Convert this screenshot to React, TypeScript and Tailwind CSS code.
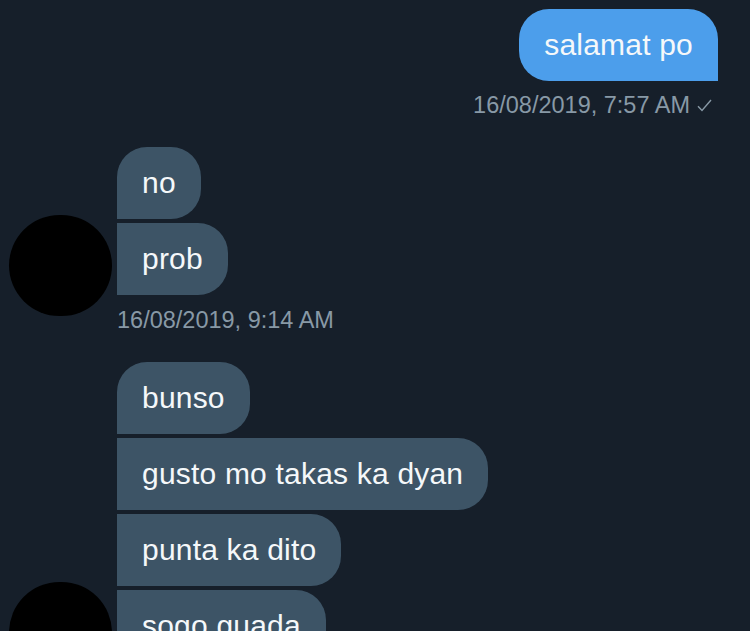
import React from 'react'

const font = { fontFamily: '"Liberation Sans", Arial, sans-serif' }

type Pos = 'first' | 'middle' | 'last'

function Bubble({ text, pos }: { text: string; pos: Pos }) {
  const corners = pos === 'first' ? 'rounded-tl-[30px]' : 'rounded-tl-none'
  return (
    <div
      className={`h-[72px] w-fit rounded-r-[30px] rounded-bl-none bg-[#3d5466] px-[25px] text-[30px] leading-[72px] tracking-[0.2px] text-[#f5f8fa] ${corners}`}
    >
      {text}
    </div>
  )
}

function Group({ messages, time }: { messages: string[]; time: string }) {
  return (
    <div className="flex">
      <div className="flex w-[117px] shrink-0 items-end pb-[19px] pl-[9px]">
        <div className="h-[101px] w-[103px] rounded-full bg-black" />
      </div>
      <div className="flex flex-col">
        <div className="flex flex-col gap-[4px]">
          {messages.map((m, i) => (
            <Bubble
              key={i}
              text={m}
              pos={i === 0 ? 'first' : i === messages.length - 1 ? 'last' : 'middle'}
            />
          ))}
        </div>
        <div className="mt-[10px] text-[23.5px] leading-[30px] text-[#8899a6]">{time}</div>
      </div>
    </div>
  )
}

export default function App() {
  return (
    <main className="h-[631px] w-[750px] overflow-hidden bg-[#161f2a] pt-[9px]" style={font}>
      <div className="flex flex-col items-end pr-[32px]">
        <div className="h-[72px] rounded-l-[30px] rounded-tr-[30px] bg-[#4c9eeb] px-[25px] text-[30px] leading-[72px] tracking-[0.2px] text-[#f5f8fa]">
          salamat po
        </div>
        <div className="mt-[9px] flex items-center gap-[7px] pr-[6px] text-[23.5px] leading-[30px] text-[#8899a6]">
          <span>16/08/2019, 7:57 AM</span>
          <svg width="15" height="13" viewBox="0 0 15 13" fill="none">
            <path d="M1 7.2 L5 11.5 L14 1" stroke="#8899a6" strokeWidth="1.4" />
          </svg>
        </div>
      </div>
      <div className="mt-[27px] flex flex-col gap-[27px]">
        <Group messages={['no', 'prob']} time="16/08/2019, 9:14 AM" />
        <Group
          messages={['bunso', 'gusto mo takas ka dyan', 'punta ka dito', 'sogo guada']}
          time="16/08/2019, 9:20 AM"
        />
      </div>
    </main>
  )
}
